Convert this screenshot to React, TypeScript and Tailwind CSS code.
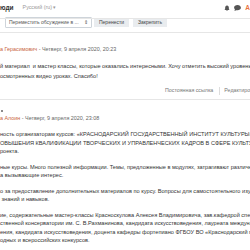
import React from "react";

const Line = ({ children, className = "" }: { children: React.ReactNode; className?: string }) => (
  <div className={"whitespace-nowrap h-[8.5px] leading-[8.5px] " + className}>{children}</div>
);

export default function App() {
  return (
    <div className="w-[250px] h-[250px] overflow-hidden bg-white relative font-['Liberation_Sans',sans-serif] text-[#333]">
      {/* navbar */}
      <div className="h-[19px] border-b border-[#e6e6e6] flex items-center relative">
        <span className="text-[6.5px] font-bold text-[#333] ml-0 -mt-[2px]">юди</span>
        <span className="text-[5.3px] text-[#999] ml-[9px] -mt-[2px]">Русский ‎(ru)‎ ▾</span>
        <div className="ml-auto flex items-center gap-[4px] -mt-[2px]">
          <svg width="6" height="6" viewBox="0 0 16 16" fill="#555">
            <path d="M8 16a2 2 0 0 0 2-2H6a2 2 0 0 0 2 2zm5-5V7a5 5 0 0 0-4-4.9V1a1 1 0 0 0-2 0v1.1A5 5 0 0 0 3 7v4l-2 2h14l-2-2z" />
          </svg>
          <svg width="7" height="6" viewBox="0 0 16 14" fill="#555">
            <path d="M8 0C3.6 0 0 2.7 0 6c0 1.5.7 2.8 1.9 3.9L1 14l4-2c1 .3 1.9.4 3 .4 4.4 0 8-2.7 8-6S12.4 0 8 0z" />
          </svg>
          <span className="text-[6.5px] text-[#e8733f] font-bold">A</span>
        </div>
      </div>
      {/* toolbar */}
      <div className="h-[14px] border-b border-[#e6e6e6] flex items-start">
        <div className="ml-[5px] -mt-[2px] w-[87px] h-[11px] border border-[#ced4da] rounded-[1px] flex items-center px-[3px] text-[5px] text-[#555]">
          <span className="whitespace-nowrap">Переместить обсуждение в ...</span>
          <span className="ml-auto text-[5px]">⇕</span>
        </div>
        <div className="ml-[2px] -mt-[1px] h-[9px] px-[5px] bg-[#e9ecef] flex items-center text-[5px] text-[#444] whitespace-nowrap">Перенести</div>
        <div className="ml-[4px] -mt-[1px] h-[9px] px-[5px] bg-[#e9ecef] flex items-center text-[5px] text-[#444] whitespace-nowrap">Закрепить</div>
      </div>
      {/* post 1 */}
      <div className="pt-[12px] border-b border-[#e6e6e6] pb-[4px]">
        <div className="whitespace-nowrap text-[5.4px] leading-[8px] text-[#666]">
          <span className="text-[#c8643c]">а Герасимович</span> - Четверг, 9 апреля 2020, 20:23
        </div>
        <div className="mt-[8px] text-[5.6px]">
          <div className="whitespace-nowrap h-[10px] leading-[10px]">й материал&nbsp; и мастер классы, которые оказались интересными. Хочу отметить высокий уровень</div>
          <div className="whitespace-nowrap h-[10px] leading-[10px]">осмотренных видео уроках. Спасибо!</div>
        </div>
        <div className="mt-[6px] flex items-center whitespace-nowrap text-[5.3px] text-[#777] h-[8px]">
          <span className="ml-[165px]">Постоянная ссылка</span>
          <span className="ml-[6px] h-[8px] border-l border-[#ddd]"></span>
          <span className="ml-[4px]">Редактировать</span>
        </div>
      </div>
      {/* post 2 */}
      <div className="pt-[10px]">
        <div className="ml-[1px] w-[2px] h-[2px] rounded-full bg-[#666]"></div>
        <div className="mt-[2px] whitespace-nowrap text-[5.4px] leading-[8px] text-[#666]">
          <span className="text-[#c8643c]">а Алоин</span> - Четверг, 9 апреля 2020, 23:08
        </div>
        <div className="mt-[8px] text-[5.6px]">
          <Line>ность организаторам курсов: «КРАСНОДАРСКИЙ ГОСУДАРСТВЕННЫЙ ИНСТИТУТ КУЛЬТУРЫ» ЦЕНТР</Line>
          <Line>ОВЫШЕНИЯ КВАЛИФИКАЦИИ ТВОРЧЕСКИХ И УПРАВЛЕНЧЕСКИХ КАДРОВ В СФЕРЕ КУЛЬТУРЫ, в рамках</Line>
          <Line>роекта.</Line>
          <div className="h-[7px]" />
          <Line>ные курсы. Много полезной информации. Темы, предложенные в модулях, затрагивают различные</Line>
          <Line>а вызывающие интерес.</Line>
          <div className="h-[7px]" />
          <Line>о за предоставление дополнительных материалов по курсу. Вопросы для самостоятельного изучения</Line>
          <Line>&nbsp;знаний и навыков.</Line>
          <div className="h-[7px]" />
          <Line>ие, содержательные мастер-классы Красноскулова Алексея Владимировича, зав.кафедрой специального</Line>
          <Line>ственной консерватории им. С. В.Рахманинова, кандидата искусствоведения, лауреата международных</Line>
          <Line>ения, кандидата искусствоведения, доцента кафедры фортепиано ФГБОУ ВО «Краснодарский государственный</Line>
          <Line>одных и всероссийских конкурсов.</Line>
        </div>
      </div>
    </div>
  );
}
